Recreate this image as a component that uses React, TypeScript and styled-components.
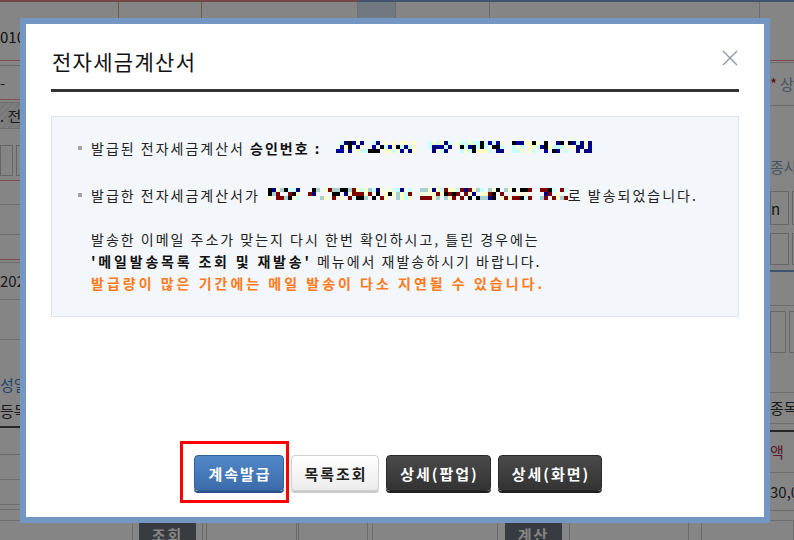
import React from "react";
import styled, { createGlobalStyle, css } from "styled-components";

const GlobalStyle = createGlobalStyle`
  html, body { margin: 0; padding: 0; width: 794px; height: 540px; overflow: hidden; }
  body { font-family: "Noto Sans CJK KR", "Noto Sans", sans-serif; background: #fff; }
  * { box-sizing: border-box; }
`;

/* ---------------- background page (dimmed) ---------------- */

const Page = styled.div`
  width: 794px;
  height: 540px;
  display: flex;
  flex-direction: column;
  background: #fff;
  overflow: hidden;
  color: #333;
  font-size: 13px;
`;

const TopLine = styled.div`
  display: flex;
  height: 2px;
  flex: 0 0 2px;
`;

const TopSeg = styled.div<{ $w?: number; $c: string }>`
  ${(p) => (p.$w ? `flex: 0 0 ${p.$w}px;` : "flex: 1;")}
  background: ${(p) => p.$c};
`;

const HeadRow = styled.div`
  display: flex;
  height: 59px;
  flex: 0 0 59px;
  border-bottom: 1px solid #e49a9a;
`;

const HeadCell = styled.div<{ $w?: number; $bg?: string; $line?: string; $color?: string }>`
  ${(p) => (p.$w ? `flex: 0 0 ${p.$w}px;` : "flex: 1;")}
  background: ${(p) => p.$bg || "transparent"};
  border-right: 1px solid ${(p) => p.$line || "#d6d6d6"};
  color: ${(p) => p.$color || "#333"};
  display: flex;
  flex-direction: column;
  align-items: center;
  padding-top: 12px;
  font-size: 15px;
  line-height: 21px;
  white-space: nowrap;
  overflow: visible;
`;

const HeadLeftText = styled.div`
  align-self: flex-start;
  margin-top: 12px;
  font-size: 15px;
  color: #222;
`;

const HeadRightText = styled.div`
  font-size: 15px;
  line-height: 22px;
  color: #8ba0c4;
  text-align: center;
  margin-left: 40px;
  margin-top: -3px;
`;

const Body = styled.div`
  flex: 1;
  display: grid;
  grid-template-columns: 20px 1fr 24px;
  overflow: hidden;
`;

const SideCol = styled.div`
  display: flex;
  flex-direction: column;
  overflow: hidden;
`;

const lineColors: Record<string, string> = {
  gray: "1px solid #d2d2d2",
  red: "1px solid #e59c9c",
  dark: "2px solid #4a4a4a",
  blue: "2px solid #7ea0d0",
  none: "0",
};

const BgLine = styled.div<{ $h: number; $line?: string; $hatch?: boolean; $align?: string }>`
  flex: 0 0 ${(p) => p.$h}px;
  height: ${(p) => p.$h}px;
  border-bottom: ${(p) => lineColors[p.$line || "none"]};
  display: flex;
  align-items: ${(p) => p.$align || "center"};
  gap: 3px;
  white-space: nowrap;
  font-size: 15px;
  overflow: hidden;
  ${(p) =>
    p.$hatch &&
    css`
      background: repeating-linear-gradient(
        135deg,
        #f2f2f2 0 3px,
        #e4e4e4 3px 5px
      );
    `}
`;

const BgText = styled.span<{ $color?: string }>`
  color: ${(p) => p.$color || "#333"};
  font-size: 15px;
  line-height: 20px;
`;

const BgInput = styled.div<{ $w: number }>`
  flex: 0 0 ${(p) => p.$w}px;
  height: 100%;
  border: 1px solid #c4c4c4;
  background: #fff;
  display: flex;
  align-items: center;
  font-size: 15px;
  color: #333;
`;

const BottomRow = styled.div`
  display: flex;
  height: 20px;
  flex: 0 0 20px;
  border-top: 1px solid #d2d2d2;
`;

const BottomCell = styled.div<{ $w?: number }>`
  ${(p) => (p.$w ? `flex: 0 0 ${p.$w}px;` : "flex: 1;")}
  border-right: 1px solid #cdcdcd;
  display: flex;
  justify-content: center;
  padding-top: 2px;
`;

const BottomBtn = styled.div`
  width: 57px;
  height: 24px;
  background: #6b717c;
  color: #fff;
  font-size: 15px;
  font-weight: 700;
  text-align: center;
  line-height: 24px;
  letter-spacing: 2px;
`;

const Overlay = styled.div`
  position: fixed;
  inset: 0;
  background: rgba(0, 0, 0, 0.48);
`;

/* ---------------- dialog ---------------- */

const Dialog = styled.div`
  position: fixed;
  left: 20px;
  top: 18px;
  width: 750px;
  height: 505px;
  border: 6px solid #7496c3;
  background: #fff;
  display: flex;
  flex-direction: column;
  padding: 0 25px 26px 25px;
  color: #222;
`;

const Header = styled.div`
  display: flex;
  align-items: center;
  justify-content: space-between;
  padding: 22px 1px 13px 1px;
  border-bottom: 3px solid #333;
`;

const Title = styled.h1`
  margin: 0;
  font-size: 21px;
  line-height: 30px;
  font-weight: 400;
  color: #111;
  letter-spacing: 1.3px;
`;

const CloseButton = styled.button`
  width: 16px;
  height: 16px;
  padding: 0;
  border: 0;
  background: transparent;
  margin-bottom: 6px;
  display: flex;
  cursor: pointer;
`;

const InfoBox = styled.div`
  margin-top: 24px;
  height: 201px;
  border: 1px solid #dfe5ee;
  background: #f3f6fb;
  padding: 20px 0 0 26px;
  font-size: 14px;
  letter-spacing: 2px;
  color: #222;
`;

const BulletList = styled.ul`
  margin: 0;
  padding: 0;
  list-style: none;
`;

const BulletItem = styled.li<{ $gapBelow: number }>`
  display: flex;
  align-items: center;
  gap: 9px;
  height: 22px;
  line-height: 22px;
  margin-bottom: ${(p) => p.$gapBelow}px;
  white-space: nowrap;
  &::before {
    content: "";
    flex: 0 0 4px;
    width: 4px;
    height: 4px;
    background: #a3a3a3;
  }
`;

const Line = styled.span`
  display: inline-flex;
  align-items: center;
  white-space: pre;
`;

const Strong = styled.b<{ $wide?: boolean }>`
  font-weight: 700;
  color: #111;
  letter-spacing: ${(p) => (p.$wide ? "2.8px" : "2px")};
`;

const Note = styled.p`
  margin: 0;
  padding-left: 13px;
  line-height: 22px;
  white-space: nowrap;
`;

const Warn = styled.span`
  font-weight: 700;
  color: #ff7a1a;
  letter-spacing: 3px;
`;

const MosaicSvg = styled.svg<{ $ml: number }>`
  display: block;
  margin-left: ${(p) => p.$ml}px;
  margin-top: -3px;
  flex: 0 0 auto;
`;

const ButtonRow = styled.div`
  margin-top: auto;
  display: flex;
  justify-content: center;
  align-items: center;
  gap: 7px;
  padding-left: 6px;
`;

const ButtonSlot = styled.div`
  position: relative;
  display: flex;
`;

const Highlight = styled.div`
  position: absolute;
  left: -14px;
  top: -14px;
  right: -5px;
  bottom: -12px;
  border: 3px solid #ff0000;
  pointer-events: none;
`;

const variants = {
  primary: css`
    background: linear-gradient(#5288c8, #3b6bab);
    border: 1px solid #33619c;
    color: #fff;
    box-shadow: 0 2px 0 #2b5285;
  `,
  light: css`
    background: linear-gradient(#ffffff, #ececec);
    border: 1px solid #cfcfcf;
    color: #222;
    box-shadow: 0 2px 0 #c9c9c9;
  `,
  dark: css`
    background: linear-gradient(#4a4a4a, #333);
    border: 1px solid #2a2a2a;
    color: #fff;
    box-shadow: 0 2px 0 #1f1f1f;
  `,
};

const ActionButton = styled.button<{ $variant: keyof typeof variants; $w: number }>`
  width: ${(p) => p.$w}px;
  height: 36px;
  border-radius: 4px;
  font-family: "Noto Sans CJK KR", sans-serif;
  font-size: 15px;
  font-weight: 700;
  letter-spacing: 2px;
  padding: 0 0 0 2px;
  cursor: pointer;
  ${(p) => variants[p.$variant]}
`;

/* ---------------- pixelated redaction ---------------- */

function rng(seed: number) {
  let a = seed >>> 0;
  return () => {
    a = (a + 0x6d2b79f5) >>> 0;
    let t = a;
    t = Math.imul(t ^ (t >>> 15), t | 1);
    t ^= t + Math.imul(t ^ (t >>> 7), t | 61);
    return ((t ^ (t >>> 14)) >>> 0) / 4294967296;
  };
}

type MosaicProps = {
  width: number;
  seed: number;
  palette: string[];
  segments: [number, number][];
  rows?: number;
  ml: number;
};

function Mosaic({ width, seed, palette, segments, rows = 3, ml }: MosaicProps) {
  const r = rng(seed);
  const cells: React.ReactNode[] = [];
  const cell = 4;
  segments.forEach(([s, e]) => {
    for (let x = s; x < e; x += cell) {
      for (let y = 0; y < rows; y++) {
        const v = r();
        if (v < 0.22) continue;
        const c = palette[Math.floor(r() * palette.length)];
        cells.push(<rect key={`${x}-${y}`} x={x} y={y * cell} width={cell} height={cell} fill={c} />);
      }
    }
  });
  return (
    <MosaicSvg $ml={ml} width={width} height={rows * cell} viewBox={`0 0 ${width} ${rows * cell}`}>
      {cells}
    </MosaicSvg>
  );
}

const palette1 = ["#000080", "#000080", "#000000", "#c8ffff", "#ffffc8", "#0000a0", "#c8ffff", "#ffffc8"];
const palette2 = ["#800000", "#800000", "#000080", "#000000", "#ffffc8", "#c8ffff", "#a8d0d0", "#ffffc8"];

/* ---------------- data ---------------- */

type Side = { h: number; line?: string; hatch?: boolean; align?: string; content?: React.ReactNode };

const leftCol: Side[] = [
  { h: 5, line: "gray" },
  { h: 34, line: "red", content: <BgText>-</BgText> },
  { h: 3, line: "gray" },
  { h: 26, line: "gray", hatch: true, content: <BgText>. 전</BgText> },
  { h: 16 },
  { h: 31, content: (<><BgInput $w={13} /><BgInput $w={10} /></>) },
  { h: 5, line: "red" },
  { h: 24, line: "gray" },
  { h: 30, line: "gray" },
  { h: 25, line: "red" },
  { h: 3, line: "gray" },
  { h: 37, line: "gray", content: <BgText>202</BgText> },
  { h: 40, line: "gray" },
  { h: 55, align: "flex-end", content: <BgText $color="#3f86cf">성일</BgText> },
  { h: 33, line: "dark", content: <BgText>등목</BgText> },
  { h: 27, line: "gray" },
  { h: 25, line: "gray" },
  { h: 25, line: "gray" },
  { h: 5, line: "gray" },
];

const rightCol: Side[] = [
  { h: 2, line: "gray" },
  { h: 43, line: "gray", content: (<><BgText $color="#b31515">*</BgText><BgText $color="#8ba0c4">상</BgText></>) },
  { h: 45 },
  { h: 32, content: <BgText $color="#8ba0c4">종사</BgText> },
  { h: 8 },
  { h: 34, content: (<><BgInput $w={19}>n</BgInput><BgInput $w={10} /></>) },
  { h: 8 },
  { h: 32, content: (<><BgInput $w={19} /><BgInput $w={10} /></>) },
  { h: 7, line: "blue" },
  { h: 34, line: "gray" },
  { h: 5 },
  { h: 42, content: (<><BgInput $w={16} /><BgInput $w={16} /></>) },
  { h: 40, line: "gray" },
  { h: 31, line: "gray", content: <BgText>종목</BgText> },
  { h: 8, line: "dark" },
  { h: 41, line: "gray", content: <BgText $color="#b33060">액</BgText> },
  { h: 38, line: "gray", content: <BgText>30,0</BgText> },
];

function SideColumn({ items }: { items: Side[] }) {
  return (
    <SideCol>
      {items.map((it, i) => (
        <BgLine key={i} $h={it.h} $line={it.line} $hatch={it.hatch} $align={it.align}>
          {it.content}
        </BgLine>
      ))}
    </SideCol>
  );
}

const bottomCells: { w?: number; btn?: string }[] = [
  { w: 133 },
  { w: 70, btn: "조회" },
  { w: 4 },
  { w: 90 },
  { w: 2 },
  { w: 69 },
  { w: 5 },
  { w: 125 },
  { w: 72, btn: "계산" },
  { w: 119 },
  { w: 13 },
  {},
];

function CloseIcon() {
  return (
    <svg width="16" height="16" viewBox="0 0 16 16">
      <path d="M1 1 L15 15 M15 1 L1 15" stroke="#8c93ab" strokeWidth="1.3" fill="none" />
    </svg>
  );
}

export default function App() {
  return (
    <>
      <GlobalStyle />
      <Page>
        <TopLine>
          <TopSeg $w={358} $c="#e08a8a" />
          <TopSeg $c="#7f9fcf" />
        </TopLine>
        <HeadRow>
          <HeadCell $w={119} $line="#e4a4a4">
            <HeadLeftText>010</HeadLeftText>
          </HeadCell>
          <HeadCell $w={83} $line="#e4a4a4" $color="#d43a3a">종사업장</HeadCell>
          <HeadCell $w={156} />
          <HeadCell $w={38} $bg="#dbe6f5" $line="#c4cde0" />
          <HeadCell $w={94} $line="#c4cde0" $color="#2c4c8c">등록</HeadCell>
          <HeadCell $w={270} $line="#c4cde0" />
          <HeadCell>
            <HeadRightText>
              종사업장
              <br />
              번호
            </HeadRightText>
          </HeadCell>
        </HeadRow>
        <Body>
          <SideColumn items={leftCol} />
          <div />
          <SideColumn items={rightCol} />
        </Body>
        <BottomRow>
          {bottomCells.map((c, i) => (
            <BottomCell key={i} $w={c.w}>
              {c.btn && <BottomBtn>{c.btn}</BottomBtn>}
            </BottomCell>
          ))}
        </BottomRow>
      </Page>
      <Overlay />
      <Dialog role="dialog" aria-label="전자세금계산서">
        <Header>
          <Title>전자세금계산서</Title>
          <CloseButton aria-label="닫기">
            <CloseIcon />
          </CloseButton>
        </Header>
        <InfoBox>
          <BulletList>
            <BulletItem $gapBelow={25}>
              <Line>
                발급된 전자세금계산서 <Strong>승인번호 :</Strong>
                <Mosaic
                  ml={15}
                  width={256}
                  seed={7}
                  palette={palette1}
                  segments={[
                    [0, 80],
                    [92, 168],
                    [176, 256],
                  ]}
                />
              </Line>
            </BulletItem>
            <BulletItem $gapBelow={22}>
              <Line>
                발급한 전자세금계산서가
                <Mosaic
                  ml={8}
                  width={300}
                  seed={21}
                  palette={palette2}
                  segments={[
                    [0, 32],
                    [40, 144],
                    [152, 264],
                    [272, 300],
                  ]}
                />
                로 발송되었습니다.
              </Line>
            </BulletItem>
          </BulletList>
          <Note>
            발송한 이메일 주소가 맞는지 다시 한번 확인하시고, 틀린 경우에는
            <br />
            <Strong $wide>'메일발송목록 조회 및 재발송'</Strong> 메뉴에서 재발송하시기 바랍니다.
            <br />
            <Warn>발급량이 많은 기간에는 메일 발송이 다소 지연될 수 있습니다.</Warn>
          </Note>
        </InfoBox>
        <ButtonRow>
          <ButtonSlot>
            <ActionButton $variant="primary" $w={90}>계속발급</ActionButton>
            <Highlight />
          </ButtonSlot>
          <ActionButton $variant="light" $w={88}>목록조회</ActionButton>
          <ActionButton $variant="dark" $w={105}>상세(팝업)</ActionButton>
          <ActionButton $variant="dark" $w={104}>상세(화면)</ActionButton>
        </ButtonRow>
      </Dialog>
    </>
  );
}
